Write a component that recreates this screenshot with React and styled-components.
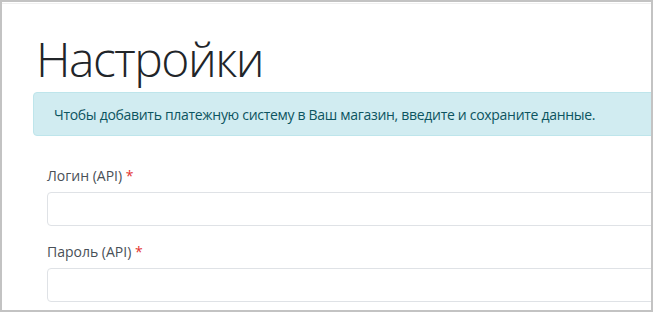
import React from "react";
import styled, { createGlobalStyle } from "styled-components";

const GlobalStyle = createGlobalStyle`
  html, body {
    margin: 0;
    padding: 0;
    background: #ffffff;
  }
  * {
    box-sizing: border-box;
  }
`;

const fields = [
  { id: "login", label: "Логин (API)" },
  { id: "password", label: "Пароль (API)" },
];

const App = () => {
  return (
    <>
      <GlobalStyle />
      <Frame>
        <Page>
          <Title>Настройки</Title>
          <Alert>
            Чтобы добавить платежную систему в Ваш магазин, введите и сохраните данные.
          </Alert>
          <Form>
            {fields.map((field) => (
              <Group key={field.id}>
                <Label htmlFor={field.id}>
                  {field.label} <Required>*</Required>
                </Label>
                <Input id={field.id} type="text" />
              </Group>
            ))}
          </Form>
        </Page>
      </Frame>
    </>
  );
};

const Frame = styled.div`
  width: 653px;
  height: 312px;
  border: 2px solid #c3c3c3;
  overflow: hidden;
  background: #ffffff;
`;

const Page = styled.div`
  width: 720px;
  border-top: 1px solid #f0f0f0;
  margin-top: 1px;
  padding: 24px 0 0 31px;
  font-family: "Open Sans", "Noto Sans", sans-serif;
  color: #212529;
`;

const Title = styled.h1`
  margin: 0 0 2px 3px;
  font-size: 48px;
  font-weight: 300;
  letter-spacing: -1.5px;
  line-height: 62px;
  color: #212529;
`;

const Alert = styled.div`
  height: 44px;
  display: flex;
  align-items: center;
  padding: 0 20px;
  background: #d1ecf1;
  border: 1px solid #bee5eb;
  border-radius: 4px;
  color: #0c5460;
  font-size: 14px;
  letter-spacing: -0.3px;
`;

const Form = styled.div`
  display: flex;
  flex-direction: column;
  gap: 16px;
  padding: 30px 0 0 14px;
`;

const Group = styled.div`
  display: flex;
  flex-direction: column;
  gap: 6px;
`;

const Label = styled.label`
  font-size: 14px;
  line-height: 20px;
  color: #495057;
`;

const Required = styled.span`
  color: #e3342f;
`;

const Input = styled.input`
  height: 34px;
  width: 100%;
  border: 1px solid #dfe2e6;
  border-radius: 4px;
  background: #ffffff;
  font-family: inherit;
  font-size: 14px;
  padding: 6px 12px;
  outline: none;
`;

export default App;
